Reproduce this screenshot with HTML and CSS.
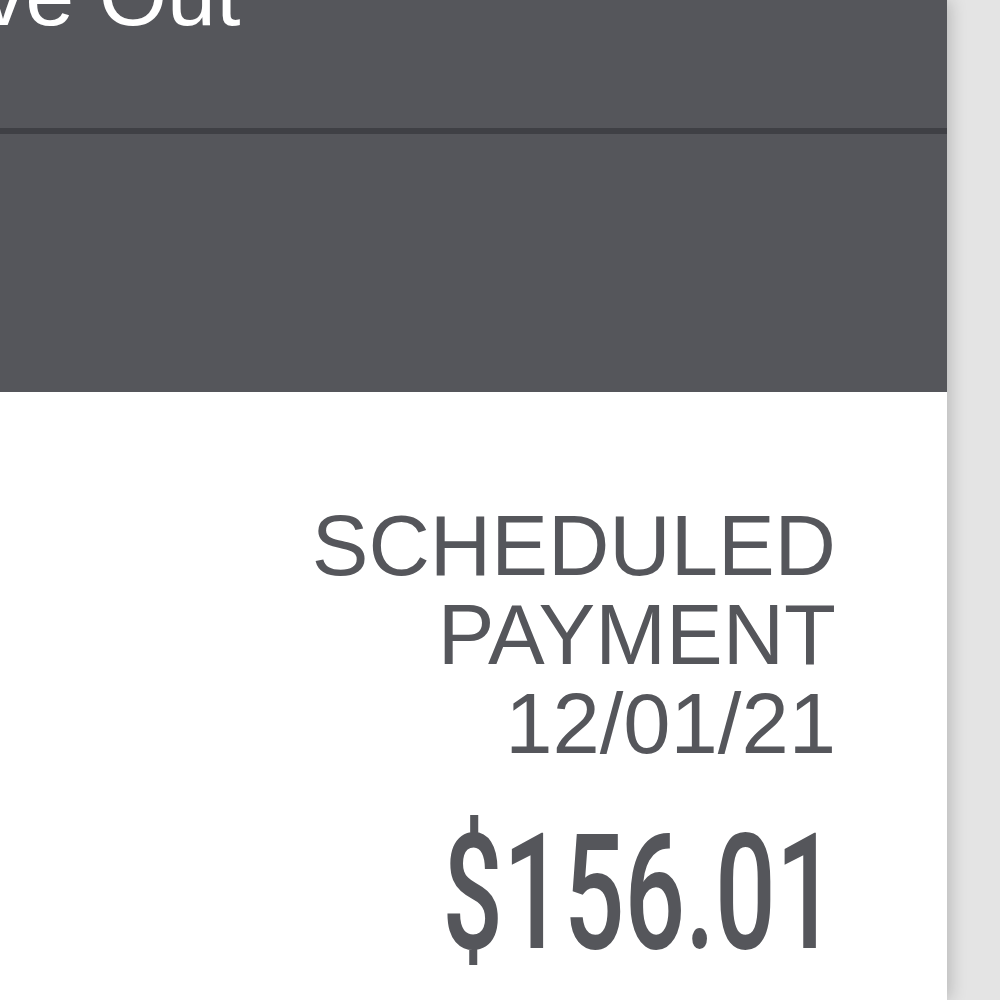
FILE: index.html
```html
<!DOCTYPE html>
<html lang="en">
<head>
  <meta charset="UTF-8">
  <meta name="viewport" content="width=device-width, initial-scale=1.0">
  <title>Move Out</title>
  <link rel="stylesheet" href="styles.css">
</head>
<body>
  <main class="panel">
    <header class="topbar">
      <h1>Move Out</h1>
    </header>
    <section class="subbar"></section>

    <section class="payment">
      <p class="label">SCHEDULED<br>PAYMENT<br>12/01/21</p>
      <p class="amount"><span>$156.01</span></p>
    </section>
  </main>
</body>
</html>
```

FILE: styles.css
```css
*{margin:0;padding:0;box-sizing:border-box;}
html,body{height:100%;overflow:hidden;}
body{background:#e4e4e4;font-family:"Liberation Sans",Arial,sans-serif;color:#55565b;}

.panel{width:947px;min-height:100%;background:#fff;box-shadow:3px 0 16px rgba(0,0,0,0.2);}

.topbar{height:134px;background:#55565b;border-bottom:6px solid #3f4045;overflow:hidden;}
.topbar h1{color:#fff;font-weight:400;font-size:88px;line-height:1;margin-top:-49px;margin-left:-141px;white-space:nowrap;}

.subbar{height:258px;background:#55565b;}

.payment{padding:109px 111px 0 0;text-align:right;}
.payment .label{font-size:85px;line-height:89px;}
.payment .amount{margin-top:42px;font-family:Roboto,"Liberation Sans",sans-serif;font-weight:500;font-size:162px;line-height:166px;}
.payment .amount span{display:inline-block;transform:scaleX(0.66);transform-origin:right center;}
```
